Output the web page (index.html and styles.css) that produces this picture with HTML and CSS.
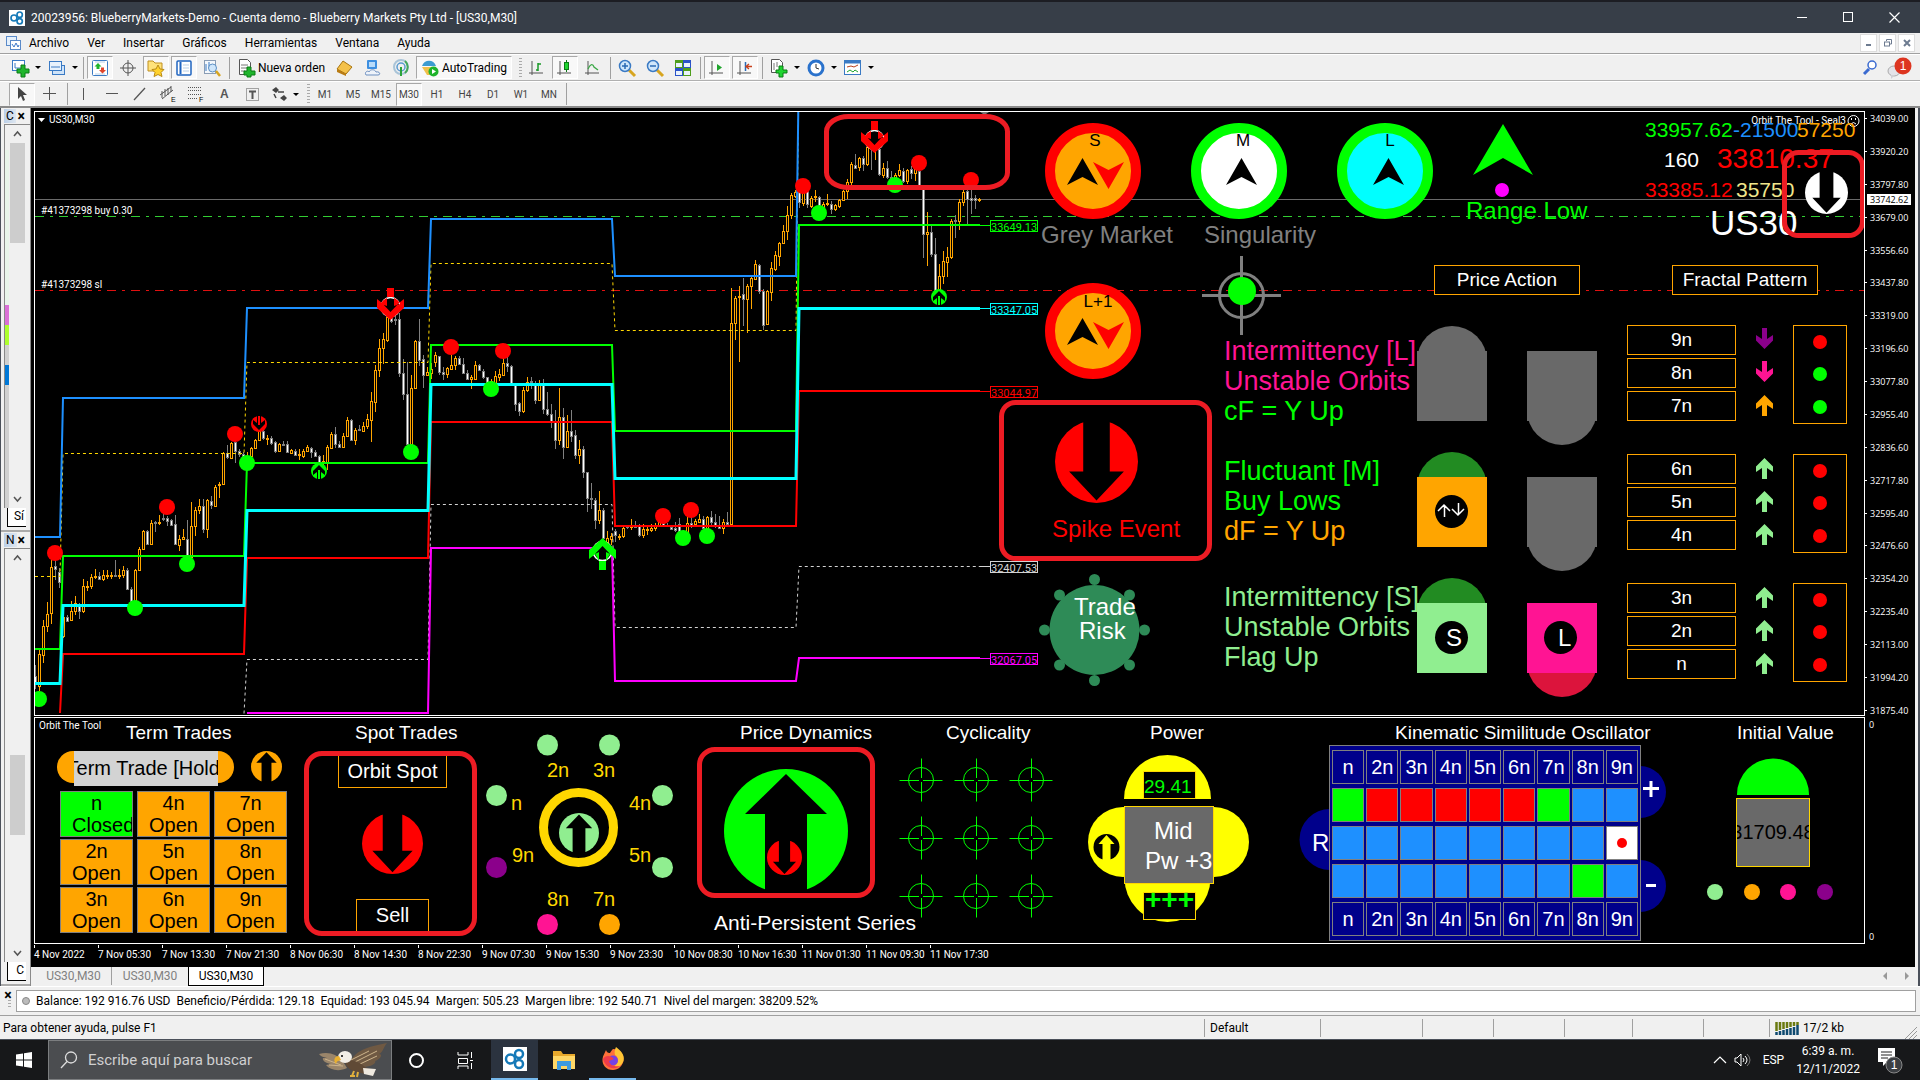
FILE: index.html
```html
<!DOCTYPE html>
<html lang="es">
<head>
    <meta charset="utf-8">
    <title>20023956: BlueberryMarkets-Demo - Cuenta demo</title>
    <link rel="stylesheet" href="styles.css">
</head>
<body>
    <!-- shared shapes -->
    <svg width="0" height="0" class="defs" aria-hidden="true">
        <symbol id="ball-down" viewBox="0 0 100 100"><circle cx="50" cy="50" r="50" fill="currentColor"/><path d="M34 -1V62H17L50 97L83 62H66V-1Z" fill="#000"/></symbol>
        <symbol id="ball-up" viewBox="0 0 100 100"><circle cx="50" cy="50" r="50" fill="currentColor"/><path d="M34 101V38H17L50 4L83 38H66V101Z" fill="#000"/></symbol>
        <symbol id="turn-down" viewBox="0 0 16 16"><circle cx="8" cy="8" r="8" fill="currentColor"/><path d="M6 0V7L2 4V8L8 14L14 8V4L10 7V0Z" fill="#000"/><path d="M7 0h2v9H7z" fill="currentColor"/></symbol>
        <symbol id="turn-up" viewBox="0 0 16 16"><circle cx="8" cy="8" r="8" fill="currentColor"/><path d="M6 16V9L2 12V8L8 2L14 8V12L10 9V16Z" fill="#000"/><path d="M7 7h2v9H7z" fill="currentColor"/></symbol>
        <symbol id="arrow-up" viewBox="0 0 17 27"><path d="M8.500 1L17 9.500V15L11 11V22H6V11L0 15V9.500Z" fill="currentColor"/></symbol>
        <symbol id="arrow-down" viewBox="0 0 17 27"><path d="M8.500 21L17 12.500V7L11 11V0H6V11L0 7V12.500Z" fill="currentColor"/></symbol>
        <symbol id="target" viewBox="-22 -22 44 44"><g fill="none" stroke="#0f0" stroke-width="1"><ellipse rx="12.500" ry="12.500"/><path d="M-21.500 .5H-2M2 .5H21.500M.5 -21.500V-2M.5 2V21.500"/></g></symbol>
        <symbol id="logo" viewBox="0 0 24 24"><rect width="24" height="24" fill="#fff"/><g fill="none" stroke="#1579b8" stroke-width="2.500"><circle cx="7.500" cy="12" r="4.500"/><circle cx="16" cy="7" r="4"/><circle cx="16" cy="17" r="4"/></g></symbol>
    </svg>

    <header class="titlebar">
        <svg class="titlebar-logo" width="16" height="16"><use href="#logo"/></svg>
        <h1>20023956: BlueberryMarkets-Demo - Cuenta demo - Blueberry Markets Pty Ltd - [US30,M30]</h1>
        <div class="win-buttons">
            <button aria-label="Minimizar"><svg width="11" height="11"><path d="M0 5.500H10" stroke="#fff"/></svg></button>
            <button aria-label="Maximizar"><svg width="11" height="11"><rect x=".5" y=".5" width="9" height="9" fill="none" stroke="#fff"/></svg></button>
            <button aria-label="Cerrar"><svg width="11" height="11"><path d="M.5 .5L10.500 10.500M10.500 .5L.5 10.500" stroke="#fff" stroke-width="1.200"/></svg></button>
        </div>
    </header>

    <nav class="menubar">
        <svg width="15" height="14"><rect x=".5" y=".5" width="10" height="9" fill="#e4f0fc" stroke="#5a8ac8"/><rect x="4.500" y="4.500" width="10" height="9" fill="#fff" stroke="#5a8ac8"/><path d="M6 8l2 3l2-4l2 4l1-2" stroke="#3b78c8" fill="none"/></svg>
        <a href="#">Archivo</a><a href="#">Ver</a><a href="#">Insertar</a><a href="#">Gráficos</a><a href="#">Herramientas</a><a href="#">Ventana</a><a href="#">Ayuda</a>
        <div class="mdi-buttons">
            <button aria-label="Minimizar gráfico"><svg width="8" height="8"><path d="M1 6H6" stroke="#6d7b90" stroke-width="2"/></svg></button>
            <button aria-label="Restaurar gráfico"><svg width="8" height="8"><path d="M2.500 2V.5H7.500V5H6" fill="none" stroke="#6d7b90"/><rect x=".5" y="3" width="5" height="4" fill="none" stroke="#6d7b90"/></svg></button>
            <button aria-label="Cerrar gráfico"><svg width="8" height="8"><path d="M1 1L7 7M7 1L1 7" stroke="#6d7b90" stroke-width="2"/></svg></button>
        </div>
    </nav>

    <div class="toolbar toolbar-main">
        <button class="tb tb-drop" aria-label="Nuevo gráfico"><svg width="18" height="18"><rect x="1.500" y="1.500" width="12" height="10" fill="#fff" stroke="#3a7ac4"/><path d="M4 4v5h7" stroke="#3a7ac4" fill="none"/><path d="M10 6h4v4h4v4h-4v4h-4v-4H6v-4h4z" fill="#1fb52c" stroke="#0b7a15"/></svg></button>
        <button class="tb tb-drop" aria-label="Perfiles"><svg width="18" height="18"><rect x="4.500" y="6.500" width="12" height="9" fill="#cfe3f8" stroke="#3a7ac4"/><rect x="1.500" y="2.500" width="12" height="9" fill="#e7f2fd" stroke="#3a7ac4"/><path d="M3 8h9" stroke="#3a7ac4"/></svg></button>
        <span class="sep"></span>
        <button class="tb on" aria-label="Observación del mercado"><svg width="16" height="16"><rect x=".5" y=".5" width="15" height="15" rx="1" fill="#fff" stroke="#3a7ac4"/><path d="M3 2h10M3 14h10" stroke="#b9cfe6"/><path d="M6 3l3.500 3.500h-2V9h-3V6.500h-2z" fill="#1fb52c"/><path d="M10.500 13.500l3.500-3.500h-2V7.500H9V10H7z" fill="#e0452b"/></svg></button>
        <button class="tb" aria-label="Ventana de datos"><svg width="16" height="16"><g fill="none" stroke="#555"><circle cx="8" cy="8" r="5"/><path d="M8 0v16M0 8h16"/></g></svg></button>
        <button class="tb on" aria-label="Navegador"><svg width="18" height="18"><path d="M1 2h5l2 2h7v8H1z" fill="#ffe27a" stroke="#c09020"/><path d="M11 6l2 4l4 .5l-3 3l1 4l-4-2l-4 2l1-4l-3-3l4-.5z" fill="#ffd22e" stroke="#b98a14"/></svg></button>
        <button class="tb on" aria-label="Terminal"><svg width="16" height="16"><rect x="1" y="1" width="14" height="14" rx="1" fill="#fff" stroke="#1f64c0" stroke-width="1.500"/><path d="M4.500 2v12" stroke="#1f64c0" stroke-width="2"/><path d="M7 5h6M7 8h6M7 11h6" stroke="#b9cfe6"/></svg></button>
        <button class="tb" aria-label="Probador de estrategias"><svg width="18" height="18"><rect x="1.500" y="1.500" width="11" height="13" fill="#f4f8fc" stroke="#8a9db5"/><path d="M3 5v7M6 3v6" stroke="#3a7ac4"/><circle cx="9.500" cy="9" r="4" fill="#cfe6fb" stroke="#5b8fc4"/><path d="M13 12l4 5" stroke="#d7a520" stroke-width="2.500"/></svg></button>
        <span class="sep"></span>
        <button class="tb tb-text tb-order"><svg width="17" height="18"><path d="M1.500 .5h8l3 3v12h-11z" fill="#fff" stroke="#555"/><path d="M3 6h7M3 9h7M3 12h4" stroke="#777"/><path d="M9 8h4v4h4v4h-4v2H9v-2H6v-4h3z" fill="#1fb52c" stroke="#0b7a15"/></svg>Nueva orden</button>
        <button class="tb" aria-label="MetaEditor"><svg width="18" height="16"><path d="M1 9L7 1l9 6l-6 7z" fill="#f4c14a" stroke="#a8740f"/><path d="M1 9l9 5v2l-9-4z" fill="#b97b12"/></svg></button>
        <button class="tb" aria-label="Opciones"><svg width="18" height="18"><rect x="3" y="1" width="10" height="9" rx="1" fill="#3d8fe0"/><rect x="5" y="3" width="6" height="5" fill="#b9dcfa"/><path d="M2 16c-2-3 2-5 3-3c1-3 6-3 7 0c4-1 5 3 2 3z" fill="#eef3fa" stroke="#6d8fc0"/></svg></button>
        <button class="tb" aria-label="Señales"><svg width="18" height="18"><circle cx="9" cy="8" r="7" fill="none" stroke="#a9c4d8" stroke-width="2"/><circle cx="9" cy="8" r="4" fill="none" stroke="#5a9ad0" stroke-width="1.500"/><path d="M9 8v9" stroke="#2aa33a" stroke-width="2"/><path d="M13 2a8 8 0 0 1 0 12" fill="none" stroke="#43a85a" stroke-width="2"/></svg></button>
        <button class="tb tb-text tb-auto on"><svg width="18" height="18"><path d="M1 7c2-7 12-7 14 0z" fill="#3c9bd0"/><path d="M1 8h14l-5 8H6z" fill="#f0c04a"/><circle cx="12.500" cy="12.500" r="5" fill="#1eb32b"/><path d="M11 10l4 2.500l-4 2.500z" fill="#fff"/></svg>AutoTrading</button>
        <span class="grip"></span>
        <button class="tb" aria-label="Gráfico de barras"><svg width="16" height="16"><g fill="none"><path d="M3 1v14M0 13h14" stroke="#555"/><path d="M9 3v8M7 10h2M9 4h3" stroke="#1a9a28" stroke-width="1.500"/></g></svg></button>
        <button class="tb on" aria-label="Gráfico de velas"><svg width="16" height="16"><path d="M3 1v14M0 13h14" stroke="#555"/><path d="M9.500 0v12" stroke="#0b7a15"/><rect x="7.500" y="2.500" width="4" height="7" fill="#1fd530" stroke="#0b7a15"/></svg></button>
        <button class="tb" aria-label="Gráfico de líneas"><svg width="16" height="16"><path d="M3 1v14M0 13h14" stroke="#555"/><path d="M3 9c3-6 5-5 6-2l4 3" fill="none" stroke="#3aa845" stroke-width="1.300"/></svg></button>
        <span class="sep"></span>
        <button class="tb" aria-label="Acercar"><svg width="18" height="18"><path d="M11 11l6 6" stroke="#d7a520" stroke-width="3"/><circle cx="7" cy="7" r="5.500" fill="#cfe6fb" stroke="#3a7ac4" stroke-width="1.500"/><path d="M4 7h6M7 4v6" stroke="#2a6ab4" stroke-width="1.500"/></svg></button>
        <button class="tb" aria-label="Alejar"><svg width="18" height="18"><path d="M11 11l6 6" stroke="#d7a520" stroke-width="3"/><circle cx="7" cy="7" r="5.500" fill="#cfe6fb" stroke="#3a7ac4" stroke-width="1.500"/><path d="M4 7h6" stroke="#2a6ab4" stroke-width="1.500"/></svg></button>
        <button class="tb" aria-label="Mosaico"><svg width="16" height="16"><rect width="8" height="8" fill="#4f9e1c"/><rect x="8" width="8" height="8" fill="#2a52c8"/><rect y="8" width="8" height="8" fill="#2a52c8"/><rect x="8" y="8" width="8" height="8" fill="#4f9e1c"/><path d="M1 3h6v4H1zM9 3h6v4H9zM1 11h6v4H1zM9 11h6v4H9z" fill="#e9f2fc"/></svg></button>
        <span class="sep"></span>
        <button class="tb on" aria-label="Desplazamiento automático"><svg width="16" height="16"><path d="M3 1v14M0 13h14" stroke="#555"/><path d="M8 4l5 3.500L8 11z" fill="#1fa52c"/></svg></button>
        <button class="tb on" aria-label="Desplazar gráfico"><svg width="16" height="16"><path d="M3 1v14M0 13h14" stroke="#555"/><path d="M8.500 2v9" stroke="#2a6ab4" stroke-width="1.500"/><path d="M15 6.500h-5M12 4l-3 2.500L12 9" stroke="#c8401c" fill="none" stroke-width="1.300"/></svg></button>
        <span class="sep"></span>
        <button class="tb tb-drop" aria-label="Indicadores"><svg width="18" height="18"><path d="M1.500 .5h8l3 3v10h-11z" fill="#fff" stroke="#555"/><path d="M4 4v7M7 3v5" stroke="#777"/><path d="M9 7h4v4h4v3h-4v4H9v-4H6v-3h3z" fill="#1fd530" stroke="#0b7a15"/></svg></button>
        <button class="tb tb-drop" aria-label="Períodos"><svg width="18" height="18"><circle cx="9" cy="9" r="7" fill="#fff" stroke="#2a72cc" stroke-width="3"/><path d="M9 5v4l3 1" stroke="#333" fill="none"/></svg></button>
        <button class="tb tb-drop" aria-label="Plantillas"><svg width="18" height="16"><rect x=".5" y=".5" width="16" height="14" fill="#fff" stroke="#3a7ac4"/><path d="M1 2h15" stroke="#3a7ac4" stroke-width="3"/><path d="M3 7l4-1l3 1l4-2" stroke="#b8401c" fill="none"/><path d="M3 12l3-2l3 2l2-2l3 2" stroke="#1fa52c" fill="none"/></svg></button>
        <div class="toolbar-right">
            <svg width="16" height="16"><path d="M2 14l5-5" stroke="#3a6ad0" stroke-width="3"/><circle cx="10" cy="5" r="4" fill="#fff" stroke="#3a6ad0" stroke-width="1.500"/></svg>
            <svg width="24" height="22"><ellipse cx="6" cy="14" rx="6" ry="5" fill="#e3e3e8" stroke="#aaa"/><path d="M3 18v4l4-4z" fill="#cfcfd4"/><circle cx="15" cy="9" r="8.500" fill="#dd3520"/><text x="15" y="13" class="badge-text" text-anchor="middle">1</text></svg>
        </div>
    </div>

    <div class="toolbar toolbar-draw">
        <button class="tb on" aria-label="Cursor"><svg width="16" height="16"><path d="M4 1l9 8H9l2 5l-2 1l-2-5l-3 3z" fill="#444"/></svg></button>
        <button class="tb" aria-label="Cruz"><svg width="16" height="16"><path d="M7.500 1v13M1 7.500h13" stroke="#555"/></svg></button>
        <span class="sep"></span>
        <button class="tb" aria-label="Línea vertical"><svg width="16" height="16"><path d="M7.500 2v12" stroke="#555"/></svg></button>
        <button class="tb" aria-label="Línea horizontal"><svg width="16" height="16"><path d="M2 7.500h12" stroke="#555"/></svg></button>
        <button class="tb" aria-label="Línea de tendencia"><svg width="16" height="16"><path d="M2 14L13 2" stroke="#555" stroke-width="1.300"/></svg></button>
        <button class="tb" aria-label="Canal"><svg width="18" height="18"><path d="M1 10L12 2M3 14L14 5M3 6v7M6 4v7M9 3v7M12 1v6" stroke="#555"/><text x="12" y="17" class="icon-letter">E</text></svg></button>
        <button class="tb" aria-label="Fibonacci"><svg width="18" height="18"><path d="M1 2.500h14M1 5.500h14M1 9.500h14M1 13.500h9" stroke="#555" stroke-dasharray="1 1"/><text x="12" y="17" class="icon-letter">F</text></svg></button>
        <button class="tb" aria-label="Texto"><svg width="16" height="16"><text x="4" y="12" class="icon-a">A</text></svg></button>
        <button class="tb" aria-label="Etiqueta"><svg width="16" height="16"><rect x="2.500" y="2.500" width="12" height="12" fill="none" stroke="#555" stroke-dasharray="1 1"/><path d="M5 5.500h7M8.500 5v8" stroke="#555" stroke-width="2"/></svg></button>
        <button class="tb tb-drop" aria-label="Flechas"><svg width="16" height="16"><path d="M1 4l4-3l3 3l-3 3zM9 12l4-3l3 3l-3 3z" fill="#444"/><path d="M3 8l2 4M7 6h6" stroke="#444" stroke-width="1.500"/></svg></button>
        <span class="grip"></span>
        <button class="tb tf">M1</button><button class="tb tf">M5</button><button class="tb tf">M15</button><button class="tb tf on">M30</button><button class="tb tf">H1</button><button class="tb tf">H4</button><button class="tb tf">D1</button><button class="tb tf">W1</button><button class="tb tf">MN</button>
        <span class="sep"></span>
    </div>

    <main class="workspace">
        <aside class="docks">
            <section class="dock dock-market">
                <h2><span>C</span><button aria-label="Cerrar">×</button></h2>
                <div class="dock-list">
                    <div class="swatches"><i class="sw-pale"></i><i class="sw-orchid"></i><i class="sw-lime"></i><i class="sw-grey"></i><i class="sw-blue"></i><i class="sw-grey sw-rest"></i></div>
                    <div class="scroll">
                        <svg width="9" height="6"><path d="M1 5l3.500-4L8 5" fill="none" stroke="#555" stroke-width="1.500"/></svg>
                        <span class="thumb thumb-top"></span>
                        <svg class="scroll-end" width="9" height="6"><path d="M1 1l3.500 4L8 1" fill="none" stroke="#555" stroke-width="1.500"/></svg>
                    </div>
                </div>
                <span class="dock-tab">Sí</span>
            </section>
            <section class="dock dock-nav">
                <h2><span>N</span><button aria-label="Cerrar">×</button></h2>
                <div class="dock-list">
                    <div class="scroll">
                        <svg width="9" height="6"><path d="M1 5l3.500-4L8 5" fill="none" stroke="#555" stroke-width="1.500"/></svg>
                        <span class="thumb thumb-mid"></span>
                        <svg class="scroll-end" width="9" height="6"><path d="M1 1l3.500 4L8 1" fill="none" stroke="#555" stroke-width="1.500"/></svg>
                    </div>
                </div>
                <span class="dock-tab">C</span>
            </section>
        </aside>

        <div class="chart-column">
            <div class="chart-window">
                <!-- main price pane -->
                <section class="pane pane-price">
                    <svg class="plot">
                        <g transform="translate(-35 -112)">
                            <path d="M35 199.500H3000" stroke="#6a6a6a"/>
                            <path d="M35 216.500H3000" stroke="#32cd32" stroke-dasharray="9 6 3 6"/>
                            <path d="M35 290.500H3000" stroke="#e01010" stroke-dasharray="9 6 3 6"/>
                            <path d="M980 112h9l-4.500 3z" fill="#777"/>
                            <path d="M38 118h7l-3.500 4z" fill="#fff"/>
                            <text x="49" y="123" class="tiny">US30,M30</text>
                            <text x="41" y="214" class="tiny">#41373298 buy 0.30</text>
                            <text x="41" y="288" class="tiny">#41373298 sl</text>
                            <g id="candles"></g>
                            <g id="levels"></g>
                            <g id="marks"></g>
                            <g id="signal-down">
                                <circle cx="390.500" cy="307" r="9.500" fill="#000" stroke="#fff" stroke-width="1.500"/>
                                <path d="M387 288h7v9h-7zM377 299l5 4l8.500 9l8.500-9l5-4v9L390.500 320L377 308zM387 298v8l-6-2q1-4 6-6zM394 298v8l6-2q-1-4-6-6z" fill="#f00"/>
                            </g>
                            <use href="#signal-down" x="484" y="-167"/>
                            <g>
                                <circle cx="602.500" cy="551" r="9.500" fill="#000" stroke="#fff" stroke-width="1.500"/>
                                <path d="M599 570h7v-9h-7zM589 559l5-4l8.500-9l8.500 9l5 4v-9L602.500 538L589 550zM599 561v-9l-4 2zM606 561v-9l4 2z" fill="#0f0"/>
                            </g>
                            <rect x="826.500" y="116.500" width="181" height="71" rx="22" ry="15" class="note"/>
                        </g>
                    </svg>

                    <div class="dashboard">
                        <div class="gauges">
                            <svg viewBox="1020 112 146 144" width="146" height="144">
                                <circle cx="1093" cy="171" r="43" fill="#ffa500" stroke="#f00" stroke-width="10"/>
                                <text x="1095" y="146" class="gauge-letter">S</text>
                                <path d="M1082.500 158L1098 185L1082.500 177L1067 185Z"/><path d="M1108.500 189L1093 162L1108.500 170L1124 162Z" fill="#f00"/>
                                <text x="1041" y="243" class="t24 grey">Grey Market</text>
                            </svg>
                            <svg viewBox="1166 112 146 144" width="146" height="144">
                                <circle cx="1239" cy="171" r="43" fill="#fff" stroke="#0f0" stroke-width="10"/>
                                <text x="1243" y="146" class="gauge-letter">M</text>
                                <path d="M1241.500 158L1257 185L1241.500 177L1226 185Z"/>
                                <text x="1204" y="243" class="t24 grey">Singularity</text>
                            </svg>
                            <svg viewBox="1312 112 146 144" width="146" height="144">
                                <circle cx="1385" cy="171" r="43" fill="#0ff" stroke="#0f0" stroke-width="10"/>
                                <text x="1390" y="146" class="gauge-letter">L</text>
                                <path d="M1388.500 158L1404 185L1388.500 177L1373 185Z"/>
                            </svg>
                            <svg viewBox="1458 112 169 144" width="169" height="144">
                                <path d="M1503 124L1533 175L1503 158L1473 175Z" fill="#0f0"/>
                                <circle cx="1502" cy="190" r="7" fill="#f0f"/>
                                <text x="1466" y="219" class="t24 lime">Range Low</text>
                            </svg>
                            <svg viewBox="1627 112 237 144" width="237" height="144">
                                <text x="1846" y="124" class="tiny" text-anchor="end">Orbit The Tool - Seal3</text>
                                <g fill="none" stroke="#fff"><circle cx="1853.500" cy="121" r="5.500"/><path d="M1851 124q2.500-3 5 0M1851.500 118v2M1855.500 118v2"/></g>
                                <g class="t21"><text x="1645" y="137" class="lime">33957.62</text><text x="1733" y="137" class="blue">-21500</text><text x="1797" y="137" class="orange">57250</text>
                                <text x="1664" y="167" class="white">160</text><text x="1645" y="197" class="red">33385.12</text><text x="1736" y="197" class="khaki">35750</text></g>
                                <text x="1717" y="168" class="t28 red">33810.37</text>
                                <text x="1710" y="235" class="t35 white">US30</text>
                                <svg x="1805" y="171" width="43" height="43" class="white"><use href="#ball-down"/></svg>
                                <rect x="1784.500" y="152.500" width="78" height="83" rx="14" class="note"/>
                            </svg>
                        </div>

                        <div class="signals">
                            <svg viewBox="999 256 216 459" width="216" height="459">
                                <circle cx="1093" cy="331" r="43" fill="#ffa500" stroke="#f00" stroke-width="10"/>
                                <text x="1098" y="307" class="gauge-letter">L+1</text>
                                <path d="M1082.500 318L1098 345L1082.500 337L1067 345Z"/><path d="M1108.500 349L1093 322L1108.500 330L1124 322Z" fill="#f00"/>
                                <svg x="1055" y="420" width="83" height="83" class="red"><use href="#ball-down"/></svg>
                                <text x="1052" y="537" class="t24 red">Spike Event</text>
                                <rect x="1001.500" y="402.500" width="208" height="156" rx="14" class="note"/>
                                <g fill="#2e8b57"><circle cx="1094.500" cy="630" r="45"/>
                                <circle cx="1094.500" cy="579.500" r="5.500"/><circle cx="1094.500" cy="680.500" r="5.500"/><circle cx="1044.500" cy="630" r="5.500"/><circle cx="1144.500" cy="630" r="5.500"/>
                                <circle cx="1059.500" cy="595" r="5.500"/><circle cx="1129.500" cy="595" r="5.500"/><circle cx="1059.500" cy="665" r="5.500"/><circle cx="1129.500" cy="665" r="5.500"/></g>
                                <text x="1074" y="615" class="t24 white">Trade</text><text x="1079" y="639" class="t24 white">Risk</text>
                            </svg>

                            <div class="readouts">
                                <svg viewBox="1215 256 80 80" width="80" height="80">
                                    <g fill="none" stroke="#808080" stroke-width="3"><circle cx="1241.500" cy="295.500" r="22"/><path d="M1202 295.500H1281M1241.500 256V335"/></g>
                                    <circle cx="1242" cy="291" r="14" fill="#0f0"/>
                                </svg>
                                <p><span class="pink">Intermittency [L]</span><span class="pink">Unstable Orbits</span><span class="lime">cF = Y Up</span></p>
                                <p class="readout-mid"><span class="lime">Fluctuant [M]</span><span class="lime">Buy Lows</span><span class="orange">dF = Y Up</span></p>
                                <p class="palegreen"><span>Intermittency [S]</span><span>Unstable Orbits</span><span>Flag Up</span></p>
                            </div>

                            <div class="price-action">
                                <button class="chip">Price Action</button>
                                <svg viewBox="1417 326 210 389" width="210" height="389">
                                    <circle cx="1452" cy="361" r="35" fill="#696969"/><rect x="1417" y="351" width="70" height="70" fill="#696969"/>
                                    <circle cx="1562" cy="410" r="35" fill="#696969"/><rect x="1527" y="351" width="70" height="70" fill="#696969"/>
                                    <circle cx="1452" cy="487" r="35" fill="#228b22"/><rect x="1417" y="477" width="70" height="70" fill="#ffa500"/>
                                    <circle cx="1451.500" cy="511.500" r="16.500"/><path d="M1444.500 517V505M1438 511l6-6l6 6M1458.500 503V515M1452 509l6 6l6-6" fill="none" stroke="#fff" stroke-width="1.500"/>
                                    <circle cx="1562" cy="536" r="35" fill="#696969"/><rect x="1527" y="477" width="70" height="70" fill="#696969"/>
                                    <circle cx="1452" cy="613" r="35" fill="#228b22"/><rect x="1417" y="603" width="70" height="70" fill="#90ee90"/>
                                    <circle cx="1451.500" cy="637.500" r="16.500"/><text x="1446" y="646" class="t24 white">S</text>
                                    <circle cx="1562" cy="662" r="35" fill="#dc143c"/><rect x="1527" y="603" width="70" height="70" fill="#ff1493"/>
                                    <circle cx="1560.500" cy="637.500" r="16.500"/><text x="1558" y="646" class="t24 white">L</text>
                                </svg>
                            </div>

                            <div class="fractal">
                                <button class="chip">Fractal Pattern</button>
                                <div class="fractal-group">
                                    <div class="frames"><button>9n</button><button>8n</button><button>7n</button></div>
                                    <div class="trend"><svg class="purple"><use href="#arrow-down"/></svg><svg class="pink"><use href="#arrow-down"/></svg><svg class="orange"><use href="#arrow-up"/></svg></div>
                                    <div class="lights"><i class="red"></i><i class="lime"></i><i class="lime"></i></div>
                                </div>
                                <div class="fractal-group">
                                    <div class="frames"><button>6n</button><button>5n</button><button>4n</button></div>
                                    <div class="trend palegreen"><svg><use href="#arrow-up"/></svg><svg><use href="#arrow-up"/></svg><svg><use href="#arrow-up"/></svg></div>
                                    <div class="lights red"><i></i><i></i><i></i></div>
                                </div>
                                <div class="fractal-group">
                                    <div class="frames"><button>3n</button><button>2n</button><button>n</button></div>
                                    <div class="trend palegreen"><svg><use href="#arrow-up"/></svg><svg><use href="#arrow-up"/></svg><svg><use href="#arrow-up"/></svg></div>
                                    <div class="lights red"><i></i><i></i><i></i></div>
                                </div>
                            </div>
                        </div>
                    </div>
                </section>
                <div class="axis axis-price">
                    <ol id="prices"></ol>
                    <span class="last-price">33742.62</span>
                </div>

                <!-- indicator pane -->
                <section class="pane pane-tool">
                    <span class="pane-label">Orbit The Tool</span>

                    <div class="tool tool-term">
                        <h3>Term Trades</h3>
                        <div class="hold-row">
                            <svg class="cap" width="17" height="33"><circle cx="16" cy="16" r="16" fill="#ffa500"/></svg>
                            <button class="hold"><span>Term Trade [Hold]</span></button>
                            <svg class="cap" width="16" height="33"><circle cx="0" cy="16" r="16" fill="#ffa500"/></svg>
                            <svg width="31" height="31" class="orange hold-arrow"><use href="#ball-up"/></svg>
                        </div>
                        <div class="terms">
                            <button class="closed"><span>n<br>Closed</span></button><button><span>4n<br>Open</span></button><button><span>7n<br>Open</span></button>
                            <button><span>2n<br>Open</span></button><button><span>5n<br>Open</span></button><button><span>8n<br>Open</span></button>
                            <button><span>3n<br>Open</span></button><button><span>6n<br>Open</span></button><button><span>9n<br>Open</span></button>
                        </div>
                    </div>

                    <div class="tool tool-spot">
                        <h3>Spot Trades</h3>
                        <div class="spot-box">
                            <button class="spot-head">Orbit Spot</button>
                            <svg width="61" height="61" class="red"><use href="#ball-down"/></svg>
                            <button class="spot-side">Sell</button>
                        </div>
                    </div>

                    <div class="tool tool-dial">
                        <svg viewBox="483 718 207 220" width="207" height="220">
                            <circle cx="578.500" cy="827.500" r="35" fill="none" stroke="#ffd700" stroke-width="9"/>
                            <svg x="559" y="813" width="40" height="40" class="palegreen"><use href="#ball-up"/></svg>
                            <g fill="#90ee90"><circle cx="547.500" cy="745" r="10.500"/><circle cx="609.500" cy="745" r="10.500"/><circle cx="496.500" cy="795.500" r="10.500"/><circle cx="662.500" cy="795.500" r="10.500"/><circle cx="662.500" cy="867.500" r="10.500"/></g>
                            <circle cx="496.500" cy="867.500" r="10.500" fill="#8b008b"/><circle cx="547.500" cy="924.500" r="10.500" fill="#ff1493"/><circle cx="609.500" cy="924.500" r="10.500" fill="#ffa500"/>
                            <g class="t20 gold"><text x="547" y="777">2n</text><text x="593" y="777">3n</text><text x="511" y="810">n</text><text x="629" y="810">4n</text><text x="512" y="862">9n</text><text x="629" y="862">5n</text><text x="547" y="906">8n</text><text x="593" y="906">7n</text></g>
                        </svg>
                    </div>

                    <div class="tool tool-dynamics">
                        <h3>Price Dynamics</h3>
                        <div class="dynamics-box">
                            <svg viewBox="726 769 124 124" width="124" height="124">
                                <circle cx="788" cy="831" r="62" fill="#0f0"/><path d="M788 774L829 814H809V893H767V814H747Z"/>
                                <svg x="769" y="840" width="35" height="35" class="red"><use href="#ball-down"/></svg>
                            </svg>
                        </div>
                        <p>Anti-Persistent Series</p>
                    </div>

                    <div class="tool tool-cycle">
                        <h3>Cyclicality</h3>
                        <div class="targets">
                            <svg><use href="#target"/></svg><svg><use href="#target"/></svg><svg><use href="#target"/></svg>
                            <svg><use href="#target"/></svg><svg><use href="#target"/></svg><svg><use href="#target"/></svg>
                            <svg><use href="#target"/></svg><svg><use href="#target"/></svg><svg><use href="#target"/></svg>
                        </div>
                    </div>

                    <div class="tool tool-power">
                        <h3>Power</h3>
                        <svg viewBox="1080 744 210 194" width="210" height="194">
                            <g fill="#ff0"><path d="M1124 799a43.500 44 0 0 1 87 0z"/><circle cx="1123" cy="842" r="35"/><circle cx="1214" cy="842" r="35"/><ellipse cx="1167.500" cy="878" rx="43" ry="44"/></g>
                            <path d="M1124 799h88v6h-88z"/>
                            <rect x="1143.500" y="771.500" width="52" height="27" stroke="#ffd700"/><text x="1144" y="793" class="t19 lime">29.41</text>
                            <rect x="1124.500" y="806.500" width="89" height="77" fill="#696969" stroke="#ffd700"/>
                            <text x="1154" y="839" class="t24">Mid</text><text x="1145" y="869" class="t24">Pw +3</text>
                            <circle cx="1106.500" cy="847" r="13"/><path d="M1106.500 835l8 9h-4v16h-8v-16h-4z" fill="#ff0"/>
                            <rect x="1143.500" y="892.500" width="52" height="27" stroke="#ffd700"/>
                            <path d="M1140 887h60v5h-60z" fill="#ff0"/>
                            <text x="1145" y="909" class="plus">+++</text>
                        </svg>
                    </div>

                    <div class="tool tool-kinematic">
                        <h3>Kinematic Similitude Oscillator</h3>
                        <div class="kinematic">
                            <svg viewBox="1290 744 390 194" width="390" height="194">
                                <g fill="#00008b"><circle cx="1330" cy="839.500" r="30.500"/><circle cx="1640" cy="792" r="26"/><circle cx="1640" cy="886" r="26"/></g>
                                <g class="white"><text x="1312" y="851" class="t24">R</text><path d="M1643 788.500h16M1651 781v16M1646 885.500h10" stroke="#fff" stroke-width="3"/></g>
                            </svg>
                            <table>
                                <tr><th>n</th><th>2n</th><th>3n</th><th>4n</th><th>5n</th><th>6n</th><th>7n</th><th>8n</th><th>9n</th></tr>
                                <tr><td class="up"></td><td class="dn"></td><td class="dn"></td><td class="dn"></td><td class="dn"></td><td class="dn"></td><td class="up"></td><td></td><td></td></tr>
                                <tr><td></td><td></td><td></td><td></td><td></td><td></td><td></td><td></td><td class="now"><i></i></td></tr>
                                <tr><td></td><td></td><td></td><td></td><td></td><td></td><td></td><td class="up"></td><td></td></tr>
                                <tr><th>n</th><th>2n</th><th>3n</th><th>4n</th><th>5n</th><th>6n</th><th>7n</th><th>8n</th><th>9n</th></tr>
                            </table>
                        </div>
                    </div>

                    <div class="tool tool-initial">
                        <h3>Initial Value</h3>
                        <svg width="72" height="37"><circle cx="36" cy="36.500" r="36" fill="#0f0"/></svg>
                        <div class="initial"><span>31709.48</span></div>
                        <div class="legend"><i class="palegreen"></i><i class="orange"></i><i class="pink"></i><i class="purple"></i></div>
                    </div>
                </section>
                <div class="axis axis-tool"><span>0</span><span>0</span></div>

                <ol class="times" id="times"></ol>
            </div>

            <nav class="chart-tabs">
                <a href="#">US30,M30</a><a href="#">US30,M30</a><a href="#" class="active">US30,M30</a>
                <svg width="40" height="10"><path d="M12 1v8L8 5z" fill="#999"/><path d="M30 1v8l4-4z" fill="#999"/></svg>
            </nav>
        </div>
    </main>

    <section class="terminal">
        <div class="terminal-side"><button aria-label="Cerrar terminal">×</button><span class="grip"></span></div>
        <div class="terminal-row">
            <i></i><span>Balance: 192 916.76 USD</span><span>Beneficio/Pérdida: 129.18</span><span>Equidad: 193 045.94</span><span>Margen: 505.23</span><span>Margen libre: 192 540.71</span><span>Nivel del margen: 38209.52%</span>
        </div>
    </section>

    <footer class="status">
        <span class="status-help">Para obtener ayuda, pulse F1</span>
        <span class="status-profile">Default</span><span class="w102"></span><span class="w71"></span><span class="w71"></span><span class="w68"></span><span class="w71"></span><span class="w66"></span>
        <span class="status-net"><svg width="25" height="13"><path d="M1.500 0v9M5 0v8M8.500 0v7M12 0v6M15.500 0v5M19 0v4M22.500 0v3" stroke="#6a7a10" stroke-width="2.500"/><path d="M1.500 10v3M5 9v4M8.500 8v5M12 7v6M15.500 6v7M19 5v8M22.500 3v10" stroke="#0e4a70" stroke-width="2.500"/></svg>17/2 kb</span>
        <svg class="resize" width="14" height="14"><path d="M2 14L14 2M6 14L14 6M10 14L14 10" stroke="#999"/></svg>
    </footer>

    <div class="taskbar">
        <button class="start" aria-label="Inicio"><svg width="16" height="16"><path d="M0 2.500L7 1.500V7.500H0zM8 1.300L16 0V7.500H8zM0 8.500H7V14.500L0 13.500zM8 8.500H16V16L8 14.700z" fill="#fff"/></svg></button>
        <label class="search">
            <svg width="18" height="18"><circle cx="11" cy="6.500" r="5.500" fill="none" stroke="#ddd" stroke-width="1.300"/><path d="M7 10.500L1 17" stroke="#ddd" stroke-width="1.300"/></svg>
            <input type="text" placeholder="Escribe aquí para buscar" aria-label="Buscar">
            <svg width="72" height="36"><path d="M2 12C12 9 20 13 25 18L30 26C22 30 13 28 9 23L14 22C8 21 5 18 6 16L10 16C6 15 3 14 2 12Z" fill="#9a856a"/><path d="M32 22C38 8 50 5 70 1C66 6 66 10 62 12C66 12 64 17 58 19C60 21 54 25 46 25Z" fill="#6f5943"/><path d="M34 18L52 9M38 20L60 9M43 22L60 14M8 17l16 6M12 23l14 1" stroke="#cdb48c"/><path d="M28 20C34 16 42 20 48 25L56 29L54 33L44 31C38 30 30 28 28 20Z" fill="#604a36"/><path d="M46 26L59 27L56 34L47 32Z" fill="#efe9df"/><ellipse cx="28" cy="15" rx="7" ry="6" fill="#f2eee6"/><path d="M22 14C17 14 16 19 19 22C20 18 22 19 24 18Z" fill="#e9b030"/><circle cx="25" cy="14" r="1"/><path d="M37 29l-2 5M41 30l-1 5M33 34h5" stroke="#e2b13c" stroke-width="2"/></svg>
        </label>
        <button class="task" aria-label="Cortana"><svg width="17" height="17"><circle cx="8.500" cy="8.500" r="6.500" fill="none" stroke="#fff" stroke-width="2"/></svg></button>
        <button class="task" aria-label="Vista de tareas"><svg width="17" height="17"><path d="M1 0v3h10V0M1.500 6.500h9v5h-9zM1 17v-3h10v3M14.500 0v6M14.500 11v6M13 8.500h3" fill="none" stroke="#fff"/></svg></button>
        <button class="task task-active" aria-label="BlueberryMarkets"><svg width="24" height="24"><use href="#logo"/></svg></button>
        <button class="task" aria-label="Explorador"><svg width="22" height="20"><path d="M0 1h8l2 3h12v15H0z" fill="#e8a92c"/><path d="M0 6h22v13H0z" fill="#ffd766"/><path d="M4 11h14v9h-4v-4H8v4H4z" fill="#3d9be0"/></svg></button>
        <button class="task task-open" aria-label="Firefox"><svg width="24" height="24"><path d="M12 2C19 2 23 7 22.500 13C22 19 17 23 12 23C5 23 1 18 1.500 12C2 8 4 6 5 3C6 6 8 6 9 6C10 4 11 3 12 2Z" fill="#ff7139"/><path d="M15 0C20 4 24 8 22.500 14C20 20 15 21 12 20C18 17 18 10 14 8C13 5 14 2 15 0Z" fill="#ffc535"/><circle cx="12" cy="13.500" r="5" fill="#7542e5"/><path d="M2 12C4 20 12 24 19 19C15 20 9 19 8 14L13 12C10 8 4 8 2 12Z" fill="#ee3b4a"/></svg></button>
        <div class="tray">
            <svg width="14" height="8"><path d="M1 7l6-6l6 6" fill="none" stroke="#fff" stroke-width="1.200"/></svg>
            <svg width="17" height="14"><path d="M1 5v4h2l4 4V1L3 5z" fill="none" stroke="#fff"/><path d="M9 5q2 2 0 4M11 3q4 4 0 8" fill="none" stroke="#fff"/><path d="M13 1q6 6 0 12" fill="none" stroke="#777"/></svg>
            <span>ESP</span>
            <time>6:39 a. m.<br>12/11/2022</time>
            <svg class="notices" width="26" height="28"><path d="M0 2h17v14H9l-4 4v-4H0z" fill="#fff"/><path d="M3 6h11M3 9h11M3 12h7" stroke="#222"/><circle cx="16" cy="19" r="8" fill="#3b3e42" stroke="#888"/><text x="16" y="23" class="badge-text" text-anchor="middle">1</text></svg>
        </div>
    </div>

    <script src="chart.js"></script>
</body>
</html>
```

FILE: styles.css
```css
* {
    box-sizing: border-box;
}
body {
    margin: 0;
    min-height: 100vh;
    display: flex;
    flex-direction: column;
    background: #f0f0f0;
    color: #000;
    font-family: Roboto, "Open Sans", sans-serif;
    font-size: 12px;
    overflow-x: hidden;
}
button {
    font: inherit;
    color: inherit;
    background: none;
    border: none;
    padding: 0;
    cursor: pointer;
}
a {
    color: inherit;
    text-decoration: none;
}
svg {
    display: block;
    flex: none;
    overflow: visible;
}
h1, h2, h3, p, ol {
    margin: 0;
    padding: 0;
    font-weight: normal;
}
ol {
    list-style: none;
}
.defs {
    position: absolute;
}

/* colours used by the indicator */
.white { color: #fff; }
.red { color: #f00; }
.lime { color: #0f0; }
.palegreen { color: #90ee90; }
.orange { color: #ffa500; }
.gold { color: #ffd700; }
.pink { color: #ff1493; }
.purple { color: #8b008b; }
.blue { color: #1e90ff; }
.khaki { color: #f0e68c; }
.grey { color: #808080; }

svg text {
    fill: currentColor;
    font-family: "Liberation Sans", Arial, sans-serif;
}
.t19 { font-size: 19px; }
.t20 { font-size: 20px; }
.t21 { font-size: 21px; }
.t24 { font-size: 24px; }
.t28 { font-size: 28px; }
.t35 { font-size: 35px; }
svg .tiny {
    font-family: Roboto, "Open Sans", sans-serif;
    font-size: 10px;
    fill: #fff;
}
svg .level-label {
    font-family: Roboto, "Open Sans", sans-serif;
    font-size: 11px;
}
.gauge-letter {
    font-size: 17px;
    text-anchor: middle;
}
.plus {
    font-size: 28px;
    font-weight: bold;
    fill: #0f0;
}
.note {
    fill: none;
    stroke: #ed1c24;
    stroke-width: 5;
}

/* window chrome */
.titlebar {
    height: 33px;
    display: flex;
    align-items: center;
    background: #373e48;
    border-top: 2px solid #1c1d23;
    color: #fff;
    padding: 0 3px 0 9px;
}
.titlebar h1 {
    flex: 1;
    font-size: 12px;
    padding-left: 6px;
}
.win-buttons {
    display: flex;
}
.win-buttons button {
    width: 46px;
    height: 30px;
    display: grid;
    place-items: center;
}
.menubar {
    height: 21px;
    display: flex;
    align-items: center;
    gap: 18px;
    padding-left: 6px;
    border-bottom: 1px solid #a0a0a0;
}
.menubar > svg {
    margin-right: -10px;
}
.mdi-buttons {
    display: flex;
    gap: 2px;
    margin-left: auto;
    padding-right: 5px;
}
.mdi-buttons button {
    width: 17px;
    height: 18px;
    display: grid;
    place-items: center;
    background: #fff;
    border: 1px solid #ddd;
}

.toolbar {
    height: 27px;
    display: flex;
    align-items: center;
    border-top: 1px solid #fff;
    border-bottom: 1px solid #b0b0b0;
}
.toolbar-main {
    padding-left: 6px;
}
.toolbar-draw {
    padding-left: 8px;
    border-bottom: 2px solid #8a8a8a;
}
.tb {
    width: 26px;
    height: 23px;
    margin: 0 1px;
    flex: none;
    display: flex;
    align-items: center;
    justify-content: center;
}
.tb.on {
    background: #f8f8f8;
    border: 1px solid #a8a8a8;
    border-right-color: #fff;
    border-bottom-color: #fff;
}
.tb-drop {
    width: 35px;
    justify-content: flex-start;
    gap: 6px;
    padding-left: 4px;
}
.tb-drop::after {
    content: "";
    border: 3px solid transparent;
    border-top-color: #000;
    border-bottom: none;
}
.tb-text {
    gap: 3px;
    white-space: nowrap;
}
.tb-order { width: 97px; }
.tb-auto {
    width: 96px;
    margin-right: 3px;
}
.tf {
    font-size: 10px;
    color: #444;
}
.sep {
    width: 6px;
    height: 22px;
    flex: none;
    background: linear-gradient(#a0a0a0, #a0a0a0) 3px 0 / 1px 100% no-repeat;
}
.grip {
    width: 8px;
    height: 20px;
    flex: none;
    background: repeating-linear-gradient(#aaa 0 1px, transparent 1px 3px) 4px 0 / 3px 100% no-repeat;
}
.toolbar-right {
    display: flex;
    gap: 10px;
    align-items: center;
    margin-left: auto;
    padding-right: 8px;
}
svg .badge-text {
    font-size: 12px;
    fill: #fff;
}
svg .icon-letter {
    font-size: 7px;
}
svg .icon-a {
    font-size: 12px;
    font-weight: bold;
    fill: #555;
}

/* docked windows on the left */
.workspace {
    flex: 1;
    display: flex;
}
.docks {
    width: 31px;
    flex: none;
    display: flex;
    flex-direction: column;
    border-left: 1px solid #4a505a;
    border-right: 1px solid #8a8a8a;
}
.dock {
    display: flex;
    flex-direction: column;
    border-bottom: 2px solid #aaa;
}
.dock-market { flex: 424; }
.dock-nav { flex: 454; }
.dock h2 {
    height: 16px;
    display: flex;
    justify-content: space-between;
    align-items: center;
    padding: 0 5px 0 3px;
    font-size: 12px;
}
.dock h2 span {
    background: linear-gradient(90deg, #bcd0e8, #dde6f0);
    padding: 0 2px;
    line-height: 14px;
}
.dock h2 button {
    font-size: 14px;
    font-weight: bold;
    line-height: 14px;
}
.dock-list {
    flex: 1;
    display: flex;
    margin-left: 3px;
    border-top: 1px solid #888;
    border-left: 1px solid #888;
}
.swatches {
    width: 4px;
    display: flex;
    flex-direction: column;
    padding-top: 25px;
}
.swatches i { height: 20px; }
.swatches .sw-pale { height: 155px; background: #e8f5ea; }
.sw-orchid { background: #da70d6; }
.sw-lime { background: #adff2f; }
.sw-grey { background: #d0d0d0; }
.sw-blue { background: #0078d7; }
.swatches .sw-rest { flex: 1; }
.scroll {
    width: 15px;
    margin-left: auto;
    margin-right: 5px;
    display: flex;
    flex-direction: column;
    align-items: center;
    padding: 6px 0;
}
.thumb {
    width: 15px;
    background: #cdcdcd;
}
.thumb-top { height: 100px; margin-top: 6px; }
.thumb-mid { height: 80px; margin-top: 194px; }
.scroll-end { margin-top: auto; }
.dock-tab {
    height: 19px;
    margin: 0 4px 3px 6px;
    padding-right: 2px;
    background: #fff;
    border: 1px solid #000;
    border-top: none;
    border-right: none;
    text-align: right;
    font-size: 12px;
    line-height: 17px;
}

/* chart window */
.chart-column {
    flex: 1;
    min-width: 0;
    display: flex;
    flex-direction: column;
    padding-right: 3px;
    border-right: 2px solid #4a505a;
}
.chart-window {
    flex: 1;
    display: grid;
    grid-template-columns: 1fr 50px;
    grid-template-rows: 1fr 227px 21px;
    row-gap: 1px;
    padding: 3px 0 0 3px;
    background: #000;
    color: #fff;
    font-family: "Liberation Sans", Arial, sans-serif;
}
.pane {
    border: 1px solid #fff;
    min-width: 0;
}
.pane-price {
    display: grid;
    overflow: hidden;
}
.plot {
    grid-area: 1 / 1;
    width: 100%;
    height: 100%;
}
.dashboard {
    grid-area: 1 / 1;
    justify-self: end;
    width: 865px;
    color: #000;
}
.gauges {
    display: flex;
    padding-left: 21px;
}
.signals {
    display: flex;
}
.readouts {
    width: 202px;
    padding-left: 9px;
    font-size: 27px;
    line-height: 30px;
    white-space: nowrap;
}
.readouts svg {
    margin-left: -9px;
}
.readouts p {
    height: 120px;
}
.readouts .readout-mid {
    height: 126px;
}
.readouts span {
    display: block;
}
.price-action {
    width: 210px;
    padding-top: 9px;
}
.chip {
    width: 146px;
    height: 30px;
    margin: 0 0 31px 17px;
    display: block;
    border: 1px solid #ffa500;
    background: #000;
    color: #fff;
    font-size: 19px;
}
.fractal {
    flex: 1;
    padding-top: 9px;
}
.fractal .chip {
    margin: 0 0 30px 45px;
}
.fractal-group {
    display: grid;
    grid-template-columns: 109px 57px 54px;
    height: 99px;
    margin-bottom: 30px;
}
.frames {
    display: flex;
    flex-direction: column;
    gap: 3px;
}
.frames button {
    height: 30px;
    border: 1px solid #ffa500;
    background: #000;
    color: #fff;
    font-size: 19px;
}
.trend, .lights {
    display: flex;
    flex-direction: column;
    align-items: center;
    justify-content: space-around;
}
.trend svg {
    width: 17px;
    height: 27px;
}
.lights {
    border: 1px solid #ffa500;
}
.lights i {
    width: 14px;
    height: 14px;
    border-radius: 50%;
    background: currentColor;
}

.axis {
    font-family: "Open Sans", "Noto Sans", sans-serif;
    font-size: 9px;
    line-height: 11px;
    position: relative;
}
.axis-price ol {
    height: 100%;
    display: flex;
    flex-direction: column;
    justify-content: space-between;
    padding-top: 2px;
}
.axis-price li {
    display: flex;
    align-items: center;
    gap: 3px;
}
.axis-price li::before {
    content: "";
    width: 2px;
    height: 1px;
    background: #fff;
}
.last-price {
    position: absolute;
    top: 83px;
    left: 2px;
    width: 44px;
    padding-left: 3px;
    background: #fff;
    color: #000;
}
.axis-tool {
    display: flex;
    flex-direction: column;
    justify-content: space-between;
    padding: 2px 4px;
}
.times {
    grid-column: 1 / -1;
    display: flex;
    font-family: Roboto, "Open Sans", sans-serif;
    font-size: 10px;
    line-height: 13px;
}
.times li {
    width: 64px;
    flex: none;
    white-space: nowrap;
}
.times li::before {
    content: "";
    display: block;
    width: 1px;
    height: 3px;
    background: #fff;
}

/* indicator pane */
.pane-tool {
    position: relative;
    display: flex;
    justify-content: space-between;
    padding: 4px 0 0 22px;
}
.pane-label {
    position: absolute;
    left: 4px;
    top: 2px;
    font: 10px/12px Roboto, "Open Sans", sans-serif;
}
.tool {
    flex: none;
    white-space: nowrap;
}
.tool h3 {
    font-size: 19px;
    line-height: 22px;
}
.tool-term { width: 248px; }
.tool-term h3 { padding-left: 69px; }
.hold-row {
    display: flex;
    padding-top: 7px;
}
.cap {
    overflow: hidden;
}
.hold {
    width: 144px;
    height: 35px;
    display: flex;
    justify-content: center;
    align-items: center;
    background: #d3d3d3;
    color: #000;
    font-size: 20px;
    overflow: hidden;
}
.hold-arrow {
    margin-left: 17px;
}
.terms {
    display: grid;
    grid-template-columns: 73px 73px 73px;
    grid-auto-rows: 46px;
    gap: 2px 4px;
    padding: 5px 0 0 3px;
    color: #000;
}
.terms button {
    padding-left: 11px;
    background: #ffa500;
    border: 1px solid #808080;
    font-size: 20px;
    line-height: 22px;
    overflow: hidden;
}
.terms .closed { background: #0f0; }
.terms span {
    display: block;
    width: 49px;
    text-align: center;
}

.tool-spot { width: 178px; }
.tool-spot h3 { padding-left: 50px; }
.spot-box {
    width: 173px;
    height: 185px;
    margin: 7px 0 0 -1px;
    display: flex;
    flex-direction: column;
    align-items: center;
    justify-content: space-between;
    padding-left: 4px;
    border: 5px solid #ed1c24;
    border-radius: 18px;
    font-size: 20px;
}
.spot-box button {
    height: 32px;
    border: 1px solid #ffa500;
}
.spot-box .spot-head {
    width: 109px;
    border-top: none;
}
.spot-box .spot-side {
    width: 73px;
    border-bottom: none;
}
.tool-dial {
    width: 207px;
    margin-top: -4px;
}
.tool-dynamics { width: 208px; }
.tool-dynamics h3 { padding-left: 50px; }
.dynamics-box {
    width: 178px;
    height: 151px;
    margin: 3px 0 0 7px;
    display: flex;
    flex-direction: column;
    align-items: center;
    justify-content: flex-end;
    border: 5px solid #ed1c24;
    border-radius: 18px;
}
.tool-dynamics p {
    padding: 13px 0 0 24px;
    font-size: 21px;
    line-height: 23px;
}
.tool-cycle { width: 182px; }
.tool-cycle h3 { padding-left: 48px; }
.targets {
    display: grid;
    grid-template-columns: 44px 44px 44px;
    gap: 14px 11px;
    padding: 14px 0 0 1px;
}
.targets svg {
    width: 44px;
    height: 44px;
}
.tool-power { width: 210px; }
.tool-power h3 { padding-left: 70px; }
.tool-kinematic { width: 390px; }
.tool-kinematic h3 { padding-left: 105px; }
.kinematic {
    display: grid;
}
.kinematic > * {
    grid-area: 1 / 1;
}
.kinematic table {
    width: 312px;
    justify-self: start;
    align-self: start;
    margin: 1px 0 0 39px;
    background: #00008b;
    border: 1px solid #808080;
    border-spacing: 2px 4px;
    font-size: 20px;
}
.kinematic th, .kinematic td {
    width: 32px;
    height: 34px;
    padding: 0;
    border: 1px solid #808080;
    font-weight: normal;
}
.kinematic td { background: #1e90ff; }
.kinematic .up { background: #0f0; }
.kinematic .dn { background: #f00; }
.kinematic .now { background: #fff; }
.now i {
    display: block;
    width: 10px;
    height: 10px;
    margin: auto;
    border-radius: 50%;
    background: #f00;
}
.tool-initial {
    width: 184px;
    padding-left: 57px;
}
.tool-initial > svg {
    margin-top: 14px;
    overflow: hidden;
}
.initial {
    width: 74px;
    height: 69px;
    margin: 3px 0 0 -1px;
    display: flex;
    align-items: center;
    justify-content: center;
    background: #696969;
    border: 1px solid #ffd700;
    color: #000;
    font-size: 20px;
    overflow: hidden;
}
.legend {
    width: 126px;
    display: flex;
    justify-content: space-between;
    margin: 17px 0 0 -30px;
}
.legend i {
    width: 16px;
    height: 16px;
    border-radius: 50%;
    background: currentColor;
}

.chart-tabs {
    height: 20px;
    display: flex;
    align-items: flex-start;
    padding-left: 5px;
    line-height: 18px;
    color: #808080;
    border-top: 1px solid #000;
}
.chart-tabs a {
    width: 76px;
    text-align: center;
    border-right: 1px solid #a0a0a0;
}
.chart-tabs a:nth-child(2) {
    border-right: none;
}
.chart-tabs .active {
    background: #fff;
    color: #000;
    border: 1px solid #000;
    border-top: none;
}
.chart-tabs svg {
    margin: 4px 0 0 auto;
}

/* terminal strip and status bar */
.terminal {
    height: 30px;
    display: flex;
    border-top: 1px solid #fff;
    border-bottom: 1px solid #a0a0a0;
    padding: 3px 4px 3px 0;
}
.terminal-side {
    width: 16px;
    display: flex;
    flex-direction: column;
    align-items: center;
}
.terminal-side button {
    font-size: 14px;
    font-weight: bold;
    line-height: 10px;
}
.terminal-side .grip {
    height: 8px;
}
.terminal-row {
    flex: 1;
    display: flex;
    align-items: center;
    gap: 6px;
    padding-left: 5px;
    background: #fff;
    border: 1px solid #a0a0a0;
    white-space: nowrap;
}
.terminal-row i {
    width: 8px;
    height: 8px;
    border: 1px solid #888;
    border-radius: 50%;
    background: #bbb;
}
.status {
    height: 24px;
    display: flex;
    align-items: center;
    line-height: 18px;
    padding-top: 1px;
    border-bottom: 1px solid #4a505a;
    position: relative;
}
.status span {
    height: 18px;
    padding-left: 5px;
    border-left: 1px solid #a0a0a0;
}
.status .status-help {
    flex: 1;
    border-left: none;
    padding-left: 3px;
}
.status .status-profile { width: 116px; }
.w102 { width: 102px; }
.w71 { width: 71px; }
.w68 { width: 68px; }
.w66 { width: 66px; }
.status .status-net {
    width: 151px;
    display: flex;
    align-items: center;
    gap: 3px;
}
.resize {
    position: absolute;
    right: 3px;
    bottom: 0;
}

.taskbar {
    height: 40px;
    display: flex;
    background: #17181a;
    color: #fff;
}
.start {
    width: 48px;
    display: grid;
    place-items: center;
}
.search {
    width: 344px;
    display: flex;
    align-items: center;
    margin-right: 1px;
    padding: 0 2px 0 11px;
    background: #4b4d50;
    border: 1px solid #7c7e80;
}
.search input {
    flex: 1;
    min-width: 0;
    border: none;
    background: none;
    font: 15px Roboto, "Open Sans", sans-serif;
    padding: 0 0 0 10px;
}
.search input::placeholder {
    color: #d0d0d0;
}
.task {
    width: 47px;
    margin-right: 2px;
    display: grid;
    place-items: center;
}
.task-active {
    background: #2b333f;
    border-bottom: 2px solid #76b9ed;
}
.task-open {
    border-bottom: 2px solid #76b9ed;
}
.tray {
    margin-left: auto;
    display: flex;
    align-items: center;
    gap: 12px;
    padding-right: 16px;
}
.tray > :first-child {
    margin-right: -5px;
}
.tray time {
    text-align: center;
    line-height: 18px;
}
.tray .notices {
    margin-left: 6px;
}
```

FILE: chart.js
```js
// Candles, oldest first, 4px apart: direction, high, body top, body bottom, low.
// Heights are in ticks below the top of the chart.
const CANDLES = `
d1430,1458,1475,1490 u1390,1402,1483,1495 u1315,1331,1405,1425 u1270,1300,1331,1345 u1165,1182,1298,1325
d1160,1179,1187,1215 d1185,1195,1220,1235 u1295,1308,1356,1360 d1303,1308,1317,1320 u1268,1292,1315,1318
u1255,1273,1293,1303 d1272,1280,1293,1312 u1212,1230,1293,1298 u1218,1229,1231,1243 u1200,1206,1229,1236
u1186,1204,1206,1213 d1195,1204,1212,1215 u1190,1202,1212,1218 u1190,1201,1203,1212 u1194,1203,1204,1212
d1165,1202,1204,1206 u1187,1201,1203,1212 u1180,1189,1202,1210 d1183,1189,1236,1240 d1232,1236,1268,1270
u1186,1189,1270,1272 u1130,1137,1189,1190 u1087,1091,1137,1138 d1088,1091,1123,1125 u1063,1069,1123,1125
d1066,1068,1070,1094 u1050,1067,1070,1074 d1045,1058,1060,1065 d1052,1058,1065,1078 d1060,1062,1074,1078
d1050,1073,1123,1126 u1101,1111,1126,1140 u1085,1105,1110,1114 d1062,1110,1155,1160 u1017,1077,1155,1158
u1030,1038,1077,1102 u1009,1027,1038,1048 d1010,1027,1085,1096 u1009,1013,1085,1107 d1003,1014,1024,1034
u974,980,1027,1030 u966,971,975,1007 u890,894,972,974 d872,893,904,908 u865,867,906,907
d862,866,888,919 d884,888,895,902 d890,895,905,908 u890,900,915,920 u878,881,900,902
u857,861,881,884 u835,838,860,862 d835,838,854,859 u848,854,856,872 d850,856,868,872
d862,866,889,892 u868,871,889,890 d862,870,873,874 d862,871,890,894 u883,885,892,893
d882,887,897,901 u884,895,899,912 u884,889,900,905 u872,879,889,890 d878,880,890,905
d885,891,901,904 d897,901,917,925 u897,914,918,930 u873,879,915,935 u841,845,880,882
d828,845,871,880 d863,870,877,879 u843,850,877,878 u803,809,850,852 d806,810,861,863
u830,836,861,874 d823,833,836,838 u815,825,838,840 u794,808,826,832 u740,762,809,865
u670,684,763,789 u604,627,684,700 u590,605,628,667 u540,548,607,612 d540,548,560,565
d545,553,556,570 d540,553,690,700 d656,691,744,760 d662,744,870,874 u695,728,870,880
u607,609,729,732 d555,609,657,672 d645,656,696,728 u675,687,697,698 u665,680,690,706
u638,646,663,675 d647,648,687,695 d676,688,693,708 u675,679,692,704 u645,671,680,682
u647,653,670,683 d648,653,668,670 d653,668,690,692 d682,690,705,709 u697,700,706,732
u660,670,705,707 d667,670,682,685 d680,686,702,706 d700,702,718,719 u705,712,720,722
u685,699,715,718 u680,693,700,712 u650,665,695,698 d650,666,673,688 d670,673,720,722
d715,720,768,788 d764,767,788,800 u725,733,788,793 u701,713,734,740 d700,710,714,730
d712,717,760,768 u708,716,760,762 d706,718,783,795 d740,783,795,800 d770,795,812,830
d785,813,861,883 u728,803,861,872 d780,803,879,909 u797,838,879,881 d785,838,851,865
d835,848,898,908 u860,884,898,922 d875,884,940,957 d940,942,1008,1043 d970,1008,1010,1035
d1008,1011,1063,1086 u990,1038,1062,1073 d1032,1038,1108,1112 u1090,1108,1118,1128 u1095,1104,1110,1125
d1085,1090,1101,1118 u1097,1102,1106,1114 u1078,1083,1102,1108 d1076,1079,1081,1086 u1060,1075,1080,1088
d1065,1074,1080,1081 d1072,1078,1101,1106 u1073,1086,1101,1108 u1075,1085,1088,1100 u1072,1082,1087,1092
u1070,1078,1083,1090 u1062,1068,1079,1081 d1060,1070,1075,1077 d1070,1075,1079,1081 d1075,1080,1085,1088
d1068,1083,1088,1092 d1058,1073,1092,1096 d1088,1092,1100,1105 u1055,1070,1098,1100 d1050,1070,1078,1082
u1060,1066,1073,1080 u1048,1060,1067,1070 d1052,1059,1083,1086 u1052,1056,1085,1090 d1040,1055,1068,1078
d1048,1067,1078,1082 d1052,1074,1082,1086 u1060,1068,1084,1098 d1042,1068,1073,1076 u475,565,1072,1078
u495,500,563,607 u470,496,498,662 d450,491,504,573 u465,471,503,590 u445,451,471,528
u405,415,452,454 d415,417,482,490 d478,482,568,582 u480,484,567,568 u410,425,485,508
u382,393,427,433 u358,362,394,419 u317,332,362,364 u268,291,332,355 u235,240,292,300
u228,233,243,248 d228,232,258,272 u220,232,260,268 d222,230,264,272 u243,248,269,272
u228,243,246,258 d242,245,268,270 u258,262,270,272 u238,260,262,268 d255,262,277,288
u262,265,277,282 u250,252,268,274 u228,231,252,256 u200,208,230,250 u157,162,208,215
d137,165,171,175 u143,147,170,180 d142,148,163,180 u112,118,162,167 d105,110,120,178
u105,110,120,152 d118,123,188,192 u160,172,189,198 d155,171,195,200 d180,194,205,210
u185,191,197,200 u163,178,190,194 d172,180,206,210 u175,178,204,212 d168,175,185,200
u170,175,185,205 d175,180,218,222 d215,222,338,400 u283,333,338,420 d320,335,390,398
d350,390,482,485 u415,445,482,486 u383,408,445,465 u372,398,410,447 u302,305,398,402
d290,303,306,348 u250,258,305,328 u225,232,258,268 d225,230,250,320 d222,247,252,288
d240,249,252,275 u247,251,254,258
`.trim().split(/\s+/);

// one value per session; null runs off the chart
const SESSIONS = [[35, 60], [63, 244], [247, 428], [431, 612], [615, 796], [799, 980]];
const TOP = -100, BOTTOM = 1551;
const LEVELS = [
    { color: '#d3d3d3', width: 1, dash: '3 3', y: [null, BOTTOM, 1415, 1023, 1334, 1180], label: '32407.53', from: 1 },
    { color: '#ffd700', width: 1, dash: '3 3', y: [1205, 894, 664, 413, 582, TOP] },
    { color: '#f0f', width: 2, y: [null, null, 1551, 1133, 1469, 1413], label: '32067.05' },
    { color: '#1e90ff', width: 2, y: [1105, 753, 526, 300, 445, TOP] },
    { color: '#0f0', width: 2, y: [1388, 1153, 918, 620, 837, 317], label: '33649.13' },
    { color: '#f00', width: 2, y: [BOTTOM, 1402, 1158, 815, 1077, 736], label: '33044.97', from: 0 },
    { color: '#0ff', width: 3, y: [1475, 1278, 1038, 719, 957, 527], label: '33347.05' }
];

const SELLS = [[55, 553], [167, 507], [235, 434], [451, 347], [503, 351], [663, 516], [691, 510], [803, 186], [919, 163], [971, 180]];
const BUYS = [[39, 699], [135, 608], [187, 564], [247, 463], [411, 452], [491, 389], [683, 538], [707, 536], [819, 213], [895, 185]];
const TURNS = [['down', 'red', 259, 424], ['up', 'lime', 319, 471], ['up', 'lime', 939, 297]];

const PRICES = ['34039.00', '33920.20', '33797.80', '33679.00', '33556.60', '33437.80', '33319.00', '33196.60', '33077.80', '32955.40',
    '32836.60', '32717.80', '32595.40', '32476.60', '32354.20', '32235.40', '32113.00', '31994.20', '31875.40'];
const TIMES = ['4 Nov 2022', '7 Nov 05:30', '7 Nov 13:30', '7 Nov 21:30', '8 Nov 06:30', '8 Nov 14:30', '8 Nov 22:30', '9 Nov 07:30',
    '9 Nov 15:30', '9 Nov 23:30', '10 Nov 08:30', '10 Nov 16:30', '11 Nov 01:30', '11 Nov 09:30', '11 Nov 17:30'];

const toY = t => Math.round(100 + t / 2.53);
const $ = id => document.getElementById(id);

$('candles').innerHTML = CANDLES.map((c, i) => {
    const [high, top, bottom, low] = c.slice(1).split(',').map(n => toY(+n));
    const x = 35 + i * 4;
    const up = c[0] === 'u';
    const h = Math.max(bottom - top, 1);
    const line = up ? '#ffa500' : '#808080';
    return `<path d="M${x + .5} ${high}V${low}" stroke="${line}"/>` +
        `<rect x="${x - .5}" y="${top + .5}" width="2" height="${h}" fill="${up ? '#000' : '#fff'}" stroke="${line}"/>`;
}).join('');

$('levels').innerHTML = LEVELS.map(l => {
    let d = '';
    l.y.forEach((t, i) => {
        if (t === null) return;
        const y = toY(t) + (l.width === 2 ? 0 : .5);
        const [a, b] = SESSIONS[i];
        d += l.from === i ? `M${b} ${y}` : `${d ? 'L' : 'M'}${a} ${y}H${b}`;
    });
    let out = `<path d="${d}" fill="none" stroke="${l.color}" stroke-width="${l.width}" stroke-dasharray="${l.dash || 'none'}"/>`;
    if (l.label) {
        const y = toY(l.y[5]) + .5;
        out += `<path d="M980 ${y}h10" stroke="${l.color}"/>` +
            `<rect x="990.5" y="${y - 5}" width="47" height="11" fill="#000" stroke="${l.color}"/>` +
            `<text class="level-label" x="991" y="${y + 5}" style="fill:${l.color}">${l.label}</text>`;
    }
    return out;
}).join('');

$('marks').innerHTML =
    SELLS.map(([x, y]) => `<circle cx="${x}" cy="${y}" r="8" fill="#f00"/>`).join('') +
    BUYS.map(([x, y]) => `<circle cx="${x}" cy="${y}" r="8" fill="#0f0"/>`).join('') +
    TURNS.map(([dir, color, x, y]) => `<svg x="${x - 8}" y="${y - 8}" width="16" height="16" class="${color}"><use href="#turn-${dir}"/></svg>`).join('');

$('prices').innerHTML = PRICES.map(p => `<li>${p}</li>`).join('');
$('times').innerHTML = TIMES.map(t => `<li>${t}</li>`).join('');
```
